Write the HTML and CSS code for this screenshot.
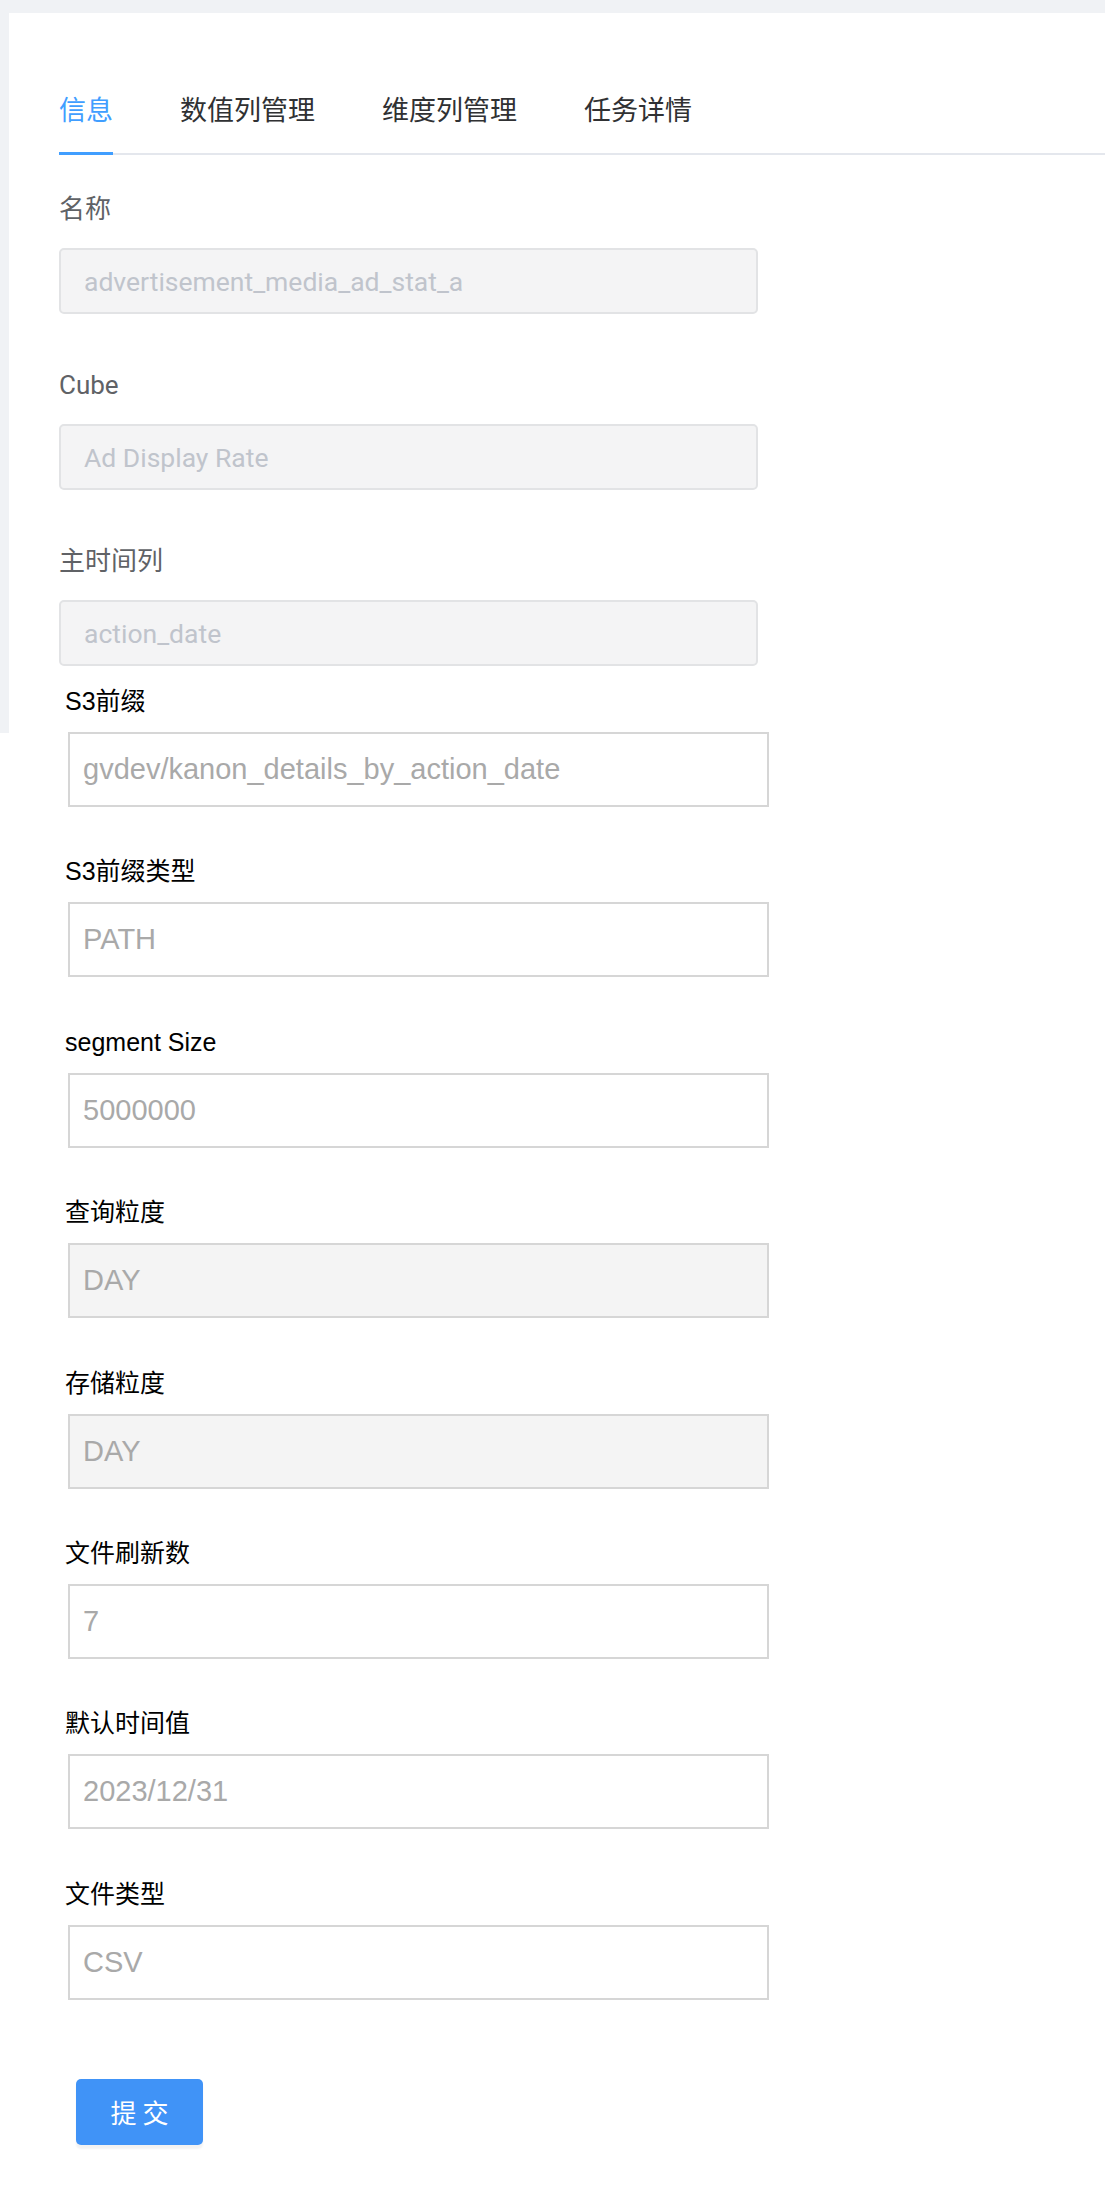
FILE: index.html
```html
<!DOCTYPE html>
<html lang="zh-CN">
<head>
<meta charset="utf-8">
<title>信息</title>
<link rel="stylesheet" href="styles.css">
</head>
<body>
<div class="shell">
  <div class="card">
    <div class="tabs">
      <div class="tab active">信息</div>
      <div class="tab">数值列管理</div>
      <div class="tab">维度列管理</div>
      <div class="tab">任务详情</div>
    </div>

    <div class="info">
      <div class="field">
        <label class="lbl">名称</label>
        <input class="ipt" disabled value="advertisement_media_ad_stat_a">
      </div>
      <div class="field">
        <label class="lbl">Cube</label>
        <input class="ipt" disabled value="Ad Display Rate">
      </div>
      <div class="field">
        <label class="lbl">主时间列</label>
        <input class="ipt" disabled value="action_date">
      </div>
    </div>

    <form class="raw">
      <div class="rf">
        <label class="rl">S3前缀</label>
        <input class="ri" value="gvdev/kanon_details_by_action_date">
      </div>
      <div class="rf">
        <label class="rl">S3前缀类型</label>
        <input class="ri" value="PATH">
      </div>
      <div class="rf">
        <label class="rl">segment Size</label>
        <input class="ri" value="5000000">
      </div>
      <div class="rf">
        <label class="rl">查询粒度</label>
        <input class="ri ri-off" disabled value="DAY">
      </div>
      <div class="rf">
        <label class="rl">存储粒度</label>
        <input class="ri ri-off" disabled value="DAY">
      </div>
      <div class="rf">
        <label class="rl">文件刷新数</label>
        <input class="ri" value="7">
      </div>
      <div class="rf">
        <label class="rl">默认时间值</label>
        <input class="ri" value="2023/12/31">
      </div>
      <div class="rf">
        <label class="rl">文件类型</label>
        <input class="ri" value="CSV">
      </div>
      <button type="button" class="submit">提 交</button>
    </form>
  </div>
</div>
</body>
</html>
```

FILE: styles.css
```css
html, body {
  margin: 0;
  padding: 0;
  background: #ffffff;
}

/* gray page frame: top band and a left strip that stops at 733px */
.shell {
  padding: 13px 0 40px 9px;
  background:
    linear-gradient(#f0f2f5, #f0f2f5) left top / 100% 13px no-repeat,
    linear-gradient(#f0f2f5, #f0f2f5) left top / 9px 733px no-repeat,
    #ffffff;
}

.card {
  padding: 52px 0 0 50px;
  background: #ffffff;
  border-radius: 4px 0 0 0;
}

.tabs {
  display: flex;
  gap: 67px;
  border-bottom: 2px solid #e4e7ed;
}

.tab {
  position: relative;
  height: 88px;
  line-height: 88px;
  font-family: "Noto Sans CJK SC", sans-serif;
  font-size: 27px;
  color: #303133;
}

.tab.active {
  color: #409eff;
}

.tab.active::after {
  content: "";
  position: absolute;
  left: 0;
  right: 0;
  bottom: -2px;
  height: 3px;
  background: #409eff;
}

.info {
  padding-top: 36px;
}

.field + .field {
  margin-top: 53px;
}

.lbl {
  display: block;
  height: 36px;
  line-height: 36px;
  font-family: Roboto, "Noto Sans CJK SC", sans-serif;
  font-size: 26px;
  color: #606266;
}

.ipt {
  display: block;
  box-sizing: border-box;
  width: 699px;
  height: 66px;
  margin: 21px 0 0 0;
  padding: 0 23px;
  border: 2px solid #e2e3e5;
  border-radius: 5px;
  background: #f4f4f5;
  font-family: Roboto, sans-serif;
  font-size: 26.5px;
  color: #c0c4cc;
  outline: none;
}

.raw {
  margin: 20px 0 0 6px;
}

.rf + .rf {
  margin-top: 49.4px;
}

.rl {
  display: block;
  height: 30px;
  line-height: 30px;
  font-family: "Liberation Sans", "Noto Sans CJK SC", sans-serif;
  font-size: 25px;
  color: #000000;
}

.ri {
  display: block;
  box-sizing: border-box;
  width: 701px;
  height: 75px;
  margin: 16px 0 0 3px;
  padding: 0 13px;
  border: 2px solid #d6d6d6;
  border-radius: 0;
  background: #ffffff;
  font-family: "Liberation Sans", sans-serif;
  font-size: 29px;
  color: #a9a9a9;
  outline: none;
}

.ri-off {
  background: #f4f4f4;
}

.submit {
  display: block;
  width: 127px;
  height: 66px;
  margin: 79px 0 0 11px;
  padding: 0;
  border: none;
  border-radius: 5px;
  background: #4093f7;
  box-shadow: 0 4px 2px rgba(0, 0, 0, 0.05);
  font-family: "Noto Sans CJK SC", sans-serif;
  font-size: 26px;
  color: #ffffff;
}
```
